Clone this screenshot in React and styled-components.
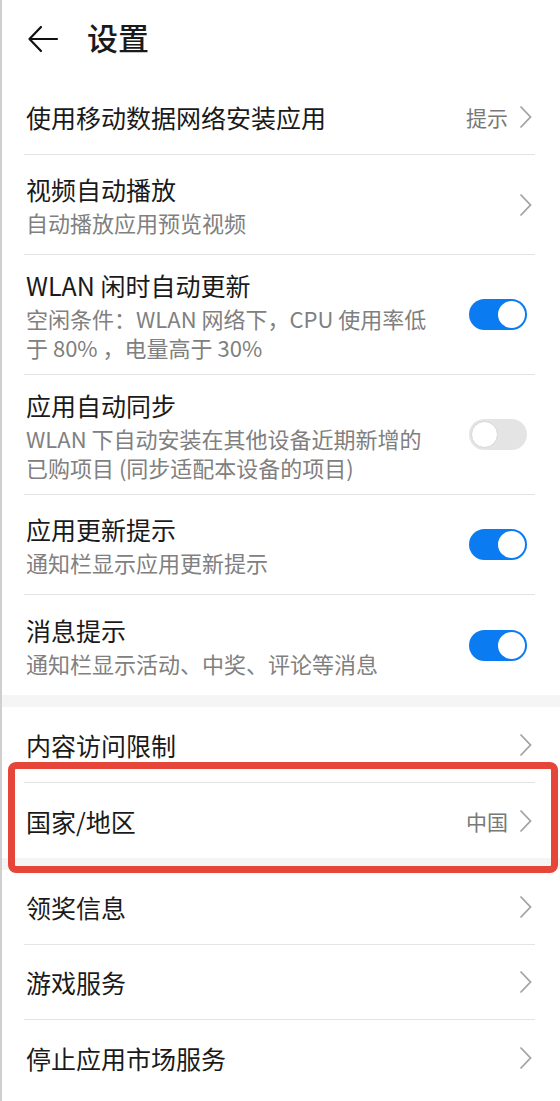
import React from 'react';
import styled, { createGlobalStyle } from 'styled-components';

const GlobalStyle = createGlobalStyle`
  body {
    margin: 0;
    background: #fff;
    font-family: "Noto Sans CJK SC", "Noto Sans", sans-serif;
  }
`;

const groups = [
  [
    { title: '使用移动数据网络安装应用', value: '提示', type: 'link', h: 75 },
    { title: '视频自动播放', sub: ['自动播放应用预览视频'], type: 'link', h: 100 },
    {
      title: 'WLAN 闲时自动更新',
      sub: ['空闲条件：WLAN 网络下，CPU 使用率低', '于 80% ，电量高于 30%'],
      type: 'switch',
      on: true,
      h: 120,
    },
    {
      title: '应用自动同步',
      sub: ['WLAN 下自动安装在其他设备近期新增的', '已购项目 (同步适配本设备的项目)'],
      type: 'switch',
      on: false,
      h: 120,
    },
    { title: '应用更新提示', sub: ['通知栏显示应用更新提示'], type: 'switch', on: true, h: 100 },
    { title: '消息提示', sub: ['通知栏显示活动、中奖、评论等消息'], type: 'switch', on: true, h: 100 },
  ],
  [
    { title: '内容访问限制', type: 'link', h: 76 },
    { title: '国家/地区', value: '中国', type: 'link', h: 75, marked: true },
  ],
  [
    { title: '领奖信息', type: 'link', h: 75 },
    { title: '游戏服务', type: 'link', h: 75 },
    { title: '停止应用市场服务', type: 'link', h: 75 },
  ],
];

function Chevron() {
  return (
    <ChevronIcon width="13" height="24" viewBox="0 0 13 24">
      <path d="M1.5 1.5 L11.5 12 L1.5 22.5" fill="none" stroke="#a3a3a3" strokeWidth="1.8" />
    </ChevronIcon>
  );
}

function SettingRow({ item }) {
  return (
    <Row $h={item.h}>
      <TextCol>
        <Title>{item.title}</Title>
        {item.sub && (
          <Sub>
            {item.sub.map((line) => (
              <span key={line}>{line}</span>
            ))}
          </Sub>
        )}
      </TextCol>
      {item.type === 'link' ? (
        <Trail>
          {item.value && <Value>{item.value}</Value>}
          <Chevron />
        </Trail>
      ) : (
        <Switch $on={item.on}>
          <Knob $on={item.on} />
        </Switch>
      )}
      {item.marked && <Highlight />}
    </Row>
  );
}

export default function App() {
  return (
    <>
      <GlobalStyle />
      <Page>
        <Header>
          <svg width="34" height="30" viewBox="0 0 34 30">
            <path d="M31 15 H5 M15 3 L3.5 15 L15 27" fill="none" stroke="#111" strokeWidth="2.2" strokeLinecap="round" strokeLinejoin="round" />
          </svg>
          <HeaderTitle>设置</HeaderTitle>
        </Header>
        {groups.map((group, gi) => (
          <React.Fragment key={gi}>
            {gi > 0 && <Band />}
            <Group>
              {group.map((item) => (
                <SettingRow key={item.title} item={item} />
              ))}
            </Group>
          </React.Fragment>
        ))}
      </Page>
    </>
  );
}

const Page = styled.div`
  width: 560px;
  height: 1101px;
  overflow: hidden;
  box-sizing: border-box;
  border-left: 2px solid #cfcfcf;
  background: #fff;
`;

const Header = styled.div`
  height: 80px;
  display: flex;
  align-items: center;
  padding-left: 24px;
  box-sizing: border-box;

  svg {
    margin-top: -3px;
  }
`;

const HeaderTitle = styled.h1`
  margin: -8px 0 0 27px;
  font-size: 31px;
  font-weight: 500;
  color: #1a1a1a;
  line-height: 1;
`;

const Group = styled.div`
  display: flex;
  flex-direction: column;
`;

const Band = styled.div`
  height: 12px;
  background: #f5f5f5;
`;

const Row = styled.div`
  position: relative;
  height: ${(p) => p.$h}px;
  margin: 0 25px 0 22px;
  display: flex;
  align-items: center;
  justify-content: space-between;
  box-sizing: border-box;
  border-bottom: 1px solid #e4e4e4;

  &:last-child {
    border-bottom: none;
  }
`;

const TextCol = styled.div`
  display: flex;
  flex-direction: column;
  gap: 2px;
  padding-left: 2px;
`;

const Title = styled.div`
  font-size: 25px;
  line-height: 34px;
  color: #1a1a1a;
  white-space: nowrap;
`;

const Sub = styled.div`
  display: flex;
  flex-direction: column;
  font-size: 22px;
  line-height: 29px;
  color: #808080;
  white-space: nowrap;
`;

const Trail = styled.div`
  display: flex;
  align-items: center;
  margin-right: 3px;
`;

const Value = styled.span`
  font-size: 21px;
  color: #787878;
  margin-right: 11px;
`;

const ChevronIcon = styled.svg`
  display: block;
`;

const Switch = styled.div`
  width: 58px;
  height: 31px;
  border-radius: 16px;
  margin-right: 8px;
  box-sizing: border-box;
  display: flex;
  align-items: center;
  justify-content: ${(p) => (p.$on ? 'flex-end' : 'flex-start')};
  padding: 0 2px;
  background: ${(p) => (p.$on ? '#0b7bf2' : '#e4e4e4')};
`;

const Knob = styled.div`
  width: 27px;
  height: 27px;
  border-radius: 50%;
  background: #fff;
  box-sizing: border-box;
  border: ${(p) => (p.$on ? 'none' : '1px solid #d6d6d6')};
`;

const Highlight = styled.div`
  position: absolute;
  top: -21px;
  bottom: -15px;
  left: -16px;
  right: -23px;
  border: 7px solid #e6453a;
  border-radius: 8px;
  pointer-events: none;
`;
